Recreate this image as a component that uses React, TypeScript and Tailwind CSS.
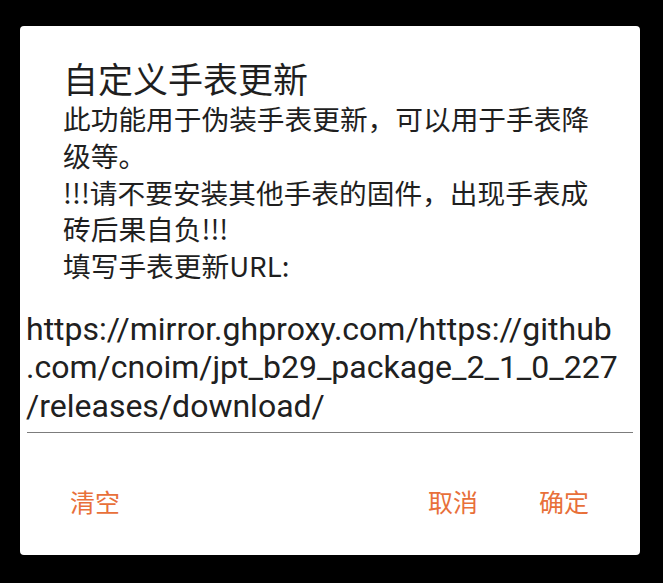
export default function App() {
  const body = [
    "此功能用于伪装手表更新，可以用于手表降",
    "级等。",
    "!!!请不要安装其他手表的固件，出现手表成",
    "砖后果自负!!!",
    "填写手表更新URL:",
  ];
  const url = [
    "https://mirror.ghproxy.com/https://github",
    ".com/cnoim/jpt_b29_package_2_1_0_227",
    "/releases/download/",
  ];

  return (
    <div className="h-[583px] w-[663px] overflow-hidden bg-black pl-[20px] pt-[26px]">
      {/* Dialog */}
      <div className="flex h-[529px] w-[620px] flex-col rounded-[4px] bg-white font-['Noto_Sans_CJK_SC',sans-serif] text-[#1f1f1f]">
        <h1 className="pl-[43px] pt-[32px] text-[35px] font-normal leading-[40px]">
          自定义手表更新
        </h1>

        <div className="mt-[2px] pl-[43px] text-[27.7px] leading-[36.75px]">
          {body.map((line) => (
            <div key={line} className="whitespace-nowrap">
              {line}
            </div>
          ))}
        </div>

        {/* URL input */}
        <div className="mx-[7px] mt-[26px] border-b-[1.5px] border-[#7c7c7c] pb-[6px]">
          <div className="-ml-[1px] font-['Roboto','Noto_Sans_CJK_SC',sans-serif] text-[32px] leading-[38.7px] text-[#202020]">
            {url.map((line) => (
              <div key={line} className="whitespace-nowrap">
                {line}
              </div>
            ))}
          </div>
        </div>

        {/* Buttons */}
        <div className="mt-[53px] flex items-center justify-between pl-[50px] pr-[51px] text-[25px] leading-[30px] text-[#e8703a]">
          <button className="w-[50px] text-left">清空</button>
          <div className="flex gap-[61px]">
            <button className="w-[50px] text-left">取消</button>
            <button className="w-[50px] text-left">确定</button>
          </div>
        </div>
      </div>
    </div>
  );
}
